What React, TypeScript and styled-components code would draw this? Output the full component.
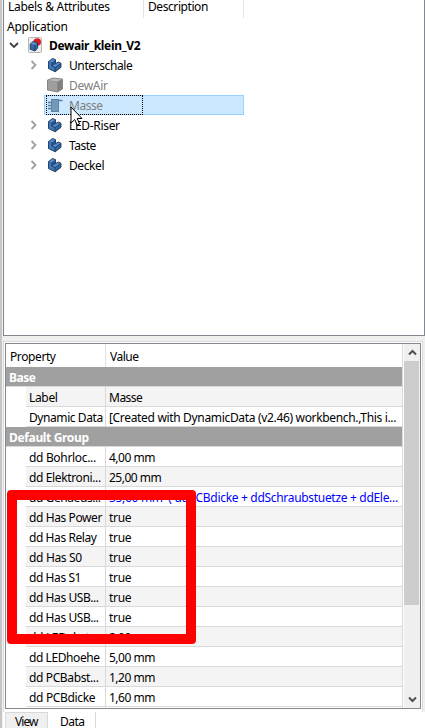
import React from "react";
import styled, { createGlobalStyle, css } from "styled-components";

const Global = createGlobalStyle`
  * { box-sizing: border-box; }
  html, body { margin: 0; height: 100%; overflow: hidden; }
  body { background: #fff; color: #000; font: 12px/20px "Noto Sans", "Open Sans", sans-serif; }
`;

const Window = styled.main`
  position: relative;
  display: flex;
  flex-direction: column;
  width: 425px;
  height: 728px;
  overflow: hidden;
  background: #f0f0f0;
  border-left: 2px solid #c6c6c6;
  padding-left: 1px;
`;

const Label = styled.span<{ $track?: number; $bold?: boolean }>`
  white-space: pre;
  letter-spacing: ${(p) => p.$track ?? -0.33}px;
  font-weight: ${(p) => (p.$bold ? 700 : 400)};
`;

const TreePanel = styled.section`
  height: 336px;
  flex: none;
  background: #fff;
  border: 1px solid #828790;
  border-top: 0;
`;

const TreeHeader = styled.header`
  display: flex;
  height: 18px;
`;

const TreeHeading = styled.div<{ $width: number }>`
  width: ${(p) => p.$width}px;
  border-right: 1px solid #e2e2e2;
  padding-left: 4px;
  line-height: 14px;
`;

const TreeCaption = styled.div`
  height: 17px;
  padding-left: 3px;
  line-height: 18px;
`;

const TreeRow = styled.div<{ $depth: number }>`
  display: flex;
  align-items: center;
  height: 20px;
  padding-left: ${(p) => p.$depth * 20}px;
`;

const Toggle = styled.span`
  display: flex;
  justify-content: center;
  align-items: center;
  width: 20px;
  height: 20px;
  flex: none;
`;

const TreeItem = styled.div<{ $selected?: boolean; $muted?: boolean; $root?: boolean }>`
  position: relative;
  display: flex;
  align-items: center;
  height: 20px;
  width: 200px;
  padding-left: ${(p) => (p.$root ? 3 : 2)}px;
  gap: ${(p) => (p.$root ? 7 : 6)}px;
  line-height: 22px;
  color: ${(p) => (p.$muted ? "#808080" : "#000")};
  border: 1px solid transparent;
  ${(p) =>
    p.$selected &&
    css`
      background: #cce8ff;
      border-color: #99d1ff;
    `}
`;

const TreeText = styled(Label)`
  padding-top: 1px;
`;

const FocusFrame = styled.span`
  position: absolute;
  left: 1px;
  top: -1px;
  width: 97px;
  height: 20px;
  border: 1px dotted #000;
`;

const Pointer = styled.svg`
  position: absolute;
  z-index: 3;
  left: 25px;
  top: 10px;
`;

const PropertyPanel = styled.section`
  flex: none;
  width: 420px;
  height: 372px;
  margin-top: 5px;
  background: #fff;
  border: 1px solid #dcdcdc;
  padding: 1px 1px 2px;
`;

const PropertyFrame = styled.div`
  display: flex;
  height: 366px;
  border: 1px solid #828790;
  background: #fff;
`;

const Table = styled.div`
  width: 397px;
  height: 364px;
  overflow: hidden;
  border-right: 1px solid #d9d9d9;
`;

const TableHeader = styled.div`
  display: flex;
  height: 23px;
  line-height: 25px;
`;

const HeadingCell = styled.div<{ $width?: number }>`
  width: ${(p) => (p.$width ? `${p.$width}px` : "auto")};
  border-right: ${(p) => (p.$width ? "1px solid #e2e2e2" : "0")};
  padding-left: 4px;
`;

const Group = styled.div`
  height: 20px;
  padding-left: 3px;
  line-height: 22px;
  color: #fff;
  background: #a0a0a0;
  border-bottom: 1px solid #d9d9d9;
`;

const Row = styled.div<{ $shade?: boolean }>`
  display: flex;
  height: 20px;
  margin-left: 20px;
  border-bottom: 1px solid #d9d9d9;
  background: ${(p) => (p.$shade ? "#f4f4f4" : "#fff")};
  line-height: 22px;
`;

const NameCell = styled.div`
  width: 80px;
  flex: none;
  padding-left: 3px;
  border-right: 1px solid #d9d9d9;
`;

const ValueCell = styled.div<{ $formula?: boolean }>`
  padding-left: 3px;
  color: ${(p) => (p.$formula ? "#0000ff" : "#000")};
  white-space: pre;
`;

const ScrollBar = styled.div`
  display: flex;
  flex-direction: column;
  width: 16px;
  margin-left: 1px;
  background: #f0f0f0;
`;

const Arrow = styled.span`
  display: flex;
  align-items: center;
  justify-content: center;
  height: 17px;
`;

const Thumb = styled.div`
  height: 244px;
  width: 15px;
  margin-bottom: auto;
  background: #cdcdcd;
`;

const Tabs = styled.nav`
  display: flex;
  flex: 1;
  margin-top: -1px;
  padding-left: 2px;
  background: #fff;
`;

const Tab = styled.div<{ $active?: boolean; $width: number }>`
  width: ${(p) => p.$width}px;
  height: 17px;
  padding-left: ${(p) => (p.$active ? 12 : 9)}px;
  line-height: ${(p) => (p.$active ? 20 : 18)}px;
  background: ${(p) => (p.$active ? "#fff" : "#f0f0f0")};
  border: solid #d9d9d9;
  border-width: ${(p) => (p.$active ? "0 1px 0 0" : "1px 1px 0 1px")};
`;

const Marker = styled.div`
  position: absolute;
  z-index: 4;
  left: 5px;
  top: 490px;
  width: 189px;
  height: 154px;
  border: 10px solid #ff0000;
  border-radius: 4px;
`;

const Chevron = ({ open }: { open?: boolean }) => (
  <svg width="10" height="10" viewBox="0 0 10 10" fill="none">
    <path d={open ? "M1 3L5 7L9 3" : "M2.5 1L6.5 5L2.5 9"} stroke={open ? "#404040" : "#a0a0a0"} strokeWidth="1.8" />
  </svg>
);

const BodyIcon = () => (
  <svg width="16" height="16" viewBox="0 0 16 16">
    <path d="M1.5 4.5L5.5 1.5L8.5 2.6V6.5L11.5 5L14 6.3V10.3L8.2 14.8L1.5 11.6Z" fill="#3465a4" stroke="#0b2548" strokeWidth=".8" />
    <path d="M2.1 4.6L5.6 2L8 3L4.9 5.6Z" fill="#5b8cc6" />
    <path d="M5.2 9L8.4 7.2L11.5 5.6L13.4 6.6L8.2 10.5Z" fill="#5b8cc6" />
    <path d="M5 5.8L8.2 3.3V7L5.2 8.8Z" fill="#24558f" />
    <path d="M2 5L4.7 6V9.2L7.8 10.8V14L2 11.3Z" fill="#3f78b5" />
    <path d="M4.9 5.7V9L8.1 10.6V14.4M8.1 10.6L13.5 6.7" fill="none" stroke="#10345d" strokeWidth=".7" />
  </svg>
);

const BoxIcon = () => (
  <svg width="16" height="16" viewBox="0 0 16 16">
    <path d="M.5 3L6 1L15.5 2V12L10.5 15L.5 13Z" fill="#8e8e8e" stroke="#777" strokeWidth=".8" />
    <path d="M1 3.2L6 1.5L15 2.3L10.5 4.4Z" fill="#b8b8b8" />
    <path d="M1 3.8L10 5V14.3L1 12.6Z" fill="#9e9e9e" />
    <path d="M10.8 5L15 2.9V11.8L10.8 14.3Z" fill="#808080" />
  </svg>
);

const DataIcon = () => (
  <svg width="16" height="16" viewBox="0 0 16 16">
    <path d="M1 5.5H4M1 8.5H4M1 11.5H4M12 3.5H15.5" stroke="#56799c" strokeWidth="1.3" />
    <rect x="4.5" y="2.5" width="7" height="12" fill="#7399b8" stroke="#5c83a5" />
  </svg>
);

const DocumentIcon = () => (
  <svg width="14" height="16" viewBox="0 0 14 16">
    <rect x=".5" y=".5" width="13" height="15" rx="1" fill="#ededed" stroke="#b5b5b5" />
    <circle cx="9.2" cy="5" r="3.8" fill="#e01b24" />
    <path d="M2.2 7L5 4.5L9.6 5.8V11L7 14L2.2 12.3Z" fill="#3465a4" stroke="#16324f" strokeWidth=".8" />
    <path d="M2.7 7L5.2 5L9.1 6L6.8 8.1Z" fill="#5b8cc2" />
    <path d="M6.8 8.1V13.5" stroke="#16324f" strokeWidth=".6" />
  </svg>
);

type Item = { name: string; kind: "body" | "box" | "data"; track?: number };
const items: Item[] = [
  { name: "Unterschale", kind: "body", track: -0.4 },
  { name: "DewAir", kind: "box", track: -0.3 },
  { name: "Masse", kind: "data", track: -0.45 },
  { name: "LED-Riser", kind: "body", track: -0.32 },
  { name: "Taste", kind: "body", track: -0.5 },
  { name: "Deckel", kind: "body", track: -0.4 },
];
const icons = { body: <BodyIcon />, box: <BoxIcon />, data: <DataIcon /> };

type Property = { name: string; value: string; nt?: number; vt?: number; formula?: boolean };
const base: Property[] = [
  { name: "Label", value: "Masse", vt: -0.5 },
  { name: "Dynamic Data", value: "[Created with DynamicData (v2.46) workbench.,This i...", nt: -0.42, vt: -0.33 },
];
const defaults: Property[] = [
  { name: "dd Bohrloc...", value: "4,00 mm", vt: -0.5 },
  { name: "dd Elektroni...", value: "25,00 mm", nt: -0.37, vt: -0.5 },
  { name: "dd Gehaeus...", value: "35,60 mm  ( ddPCBdicke + ddSchraubstuetze + ddEle...", nt: -0.42, vt: -0.31, formula: true },
  { name: "dd Has Power", value: "true", nt: -0.4 },
  { name: "dd Has Relay", value: "true", nt: -0.42 },
  { name: "dd Has S0", value: "true" },
  { name: "dd Has S1", value: "true", nt: -0.42 },
  { name: "dd Has USB...", value: "true", nt: -0.42 },
  { name: "dd Has USB...", value: "true", nt: -0.42 },
  { name: "dd LEDabst...", value: "2,00 mm", vt: -0.5 },
  { name: "dd LEDhoehe", value: "5,00 mm", nt: -0.42, vt: -0.5 },
  { name: "dd PCBabst...", value: "1,20 mm", nt: -0.37, vt: -0.5 },
  { name: "dd PCBdicke", value: "1,60 mm", vt: -0.5 },
];

const PropertyRow = ({ item, shade }: { item: Property; shade: boolean }) => (
  <Row $shade={shade}>
    <NameCell><Label $track={item.nt}>{item.name}</Label></NameCell>
    <ValueCell $formula={item.formula}><Label $track={item.vt}>{item.value}</Label></ValueCell>
  </Row>
);

export default function App() {
  return (
    <>
      <Global />
      <Window>
        <TreePanel>
          <TreeHeader>
            <TreeHeading $width={140}><Label $track={-0.28}>Labels &amp; Attributes</Label></TreeHeading>
            <TreeHeading $width={100}><Label $track={-0.42}>Description</Label></TreeHeading>
          </TreeHeader>
          <TreeCaption><Label $track={-0.22}>Application</Label></TreeCaption>
          <TreeRow $depth={0}>
            <Toggle><Chevron open /></Toggle>
            <TreeItem $root><DocumentIcon /><TreeText $bold $track={-0.33}>Dewair_klein_V2</TreeText></TreeItem>
          </TreeRow>
          {items.map((item) => (
            <TreeRow $depth={1} key={item.name}>
              <Toggle>{item.kind === "body" && <Chevron />}</Toggle>
              <TreeItem $selected={item.kind === "data"} $muted={item.kind !== "body"}>
                {icons[item.kind]}
                <TreeText $track={item.track}>{item.name}</TreeText>
                {item.kind === "data" && (
                  <>
                    <FocusFrame />
                    <Pointer width="13" height="20" viewBox="0 0 13 20">
                      <path d="M1 1V17L4.7 13.5L7.2 19L9.6 18L7.2 12.5H12Z" fill="#fff" stroke="#000" />
                    </Pointer>
                  </>
                )}
              </TreeItem>
            </TreeRow>
          ))}
        </TreePanel>
        <PropertyPanel>
          <PropertyFrame>
            <Table>
              <TableHeader>
                <HeadingCell $width={100}><Label $track={-0.4}>Property</Label></HeadingCell>
                <HeadingCell><Label $track={-0.5}>Value</Label></HeadingCell>
              </TableHeader>
              <Group><Label $bold $track={-0.45}>Base</Label></Group>
              {base.map((item, i) => <PropertyRow key={i} item={item} shade={i % 2 === 0} />)}
              <Group><Label $bold $track={-0.35}>Default Group</Label></Group>
              {defaults.map((item, i) => <PropertyRow key={i} item={item} shade={i % 2 === 1} />)}
            </Table>
            <ScrollBar>
              <Arrow><svg width="9" height="7" viewBox="0 0 9 7"><path d="M1 5.5L4.5 2L8 5.5" fill="none" stroke="#505050" strokeWidth="2" /></svg></Arrow>
              <Thumb />
              <Arrow><svg width="9" height="7" viewBox="0 0 9 7"><path d="M1 1.5L4.5 5L8 1.5" fill="none" stroke="#505050" strokeWidth="2" /></svg></Arrow>
            </ScrollBar>
          </PropertyFrame>
        </PropertyPanel>
        <Tabs>
          <Tab $width={43}><Label $track={-0.9}>View</Label></Tab>
          <Tab $width={48} $active><Label $track={-0.5}>Data</Label></Tab>
        </Tabs>
        <Marker />
      </Window>
    </>
  );
}
